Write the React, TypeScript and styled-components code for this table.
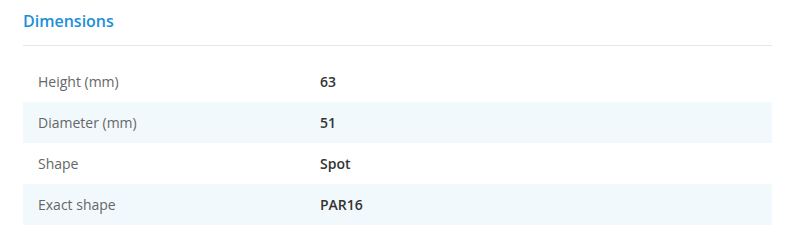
import React from "react";
import styled, { createGlobalStyle } from "styled-components";

interface Spec {
    label: string,
    value: string
}

const specs: Spec[] = [
    { label: "Height (mm)", value: "63" },
    { label: "Diameter (mm)", value: "51" },
    { label: "Shape", value: "Spot" },
    { label: "Exact shape", value: "PAR16" }
];

const GlobalStyle = createGlobalStyle`
    body {
        margin: 0;
        background: #fff;
        font-family: "Open Sans", "Noto Sans", sans-serif;
    }
`;

const Section = styled.section`
    width: 749px;
    padding: 10px 0 0 23px;
`;

const Title = styled.h2`
    margin: 0;
    font-size: 16px;
    line-height: 22px;
    font-weight: 600;
    color: #1b8fd9;
    padding-bottom: 13px;
    border-bottom: 1px solid #e7e7e7;
`;

const Table = styled.div`
    margin-top: 15px;
    display: flex;
    flex-direction: column;
`;

const Row = styled.div<{ $striped: boolean }>`
    display: grid;
    grid-template-columns: 282px 1fr;
    align-items: center;
    height: 41px;
    padding-left: 15px;
    background: ${p => (p.$striped ? "#f2f9fd" : "transparent")};
    font-size: 14px;
`;

const Label = styled.span`
    color: #666;
`;

const Value = styled.span`
    color: #333;
    font-weight: 600;
`;

const App = () => {
    return (
        <>
            <GlobalStyle />
            <Section>
                <Title>Dimensions</Title>
                <Table>
                    {specs.map((s, i) => (
                        <Row key={s.label} $striped={i % 2 === 1}>
                            <Label>{s.label}</Label>
                            <Value>{s.value}</Value>
                        </Row>
                    ))}
                </Table>
            </Section>
        </>
    )
}

export default App
